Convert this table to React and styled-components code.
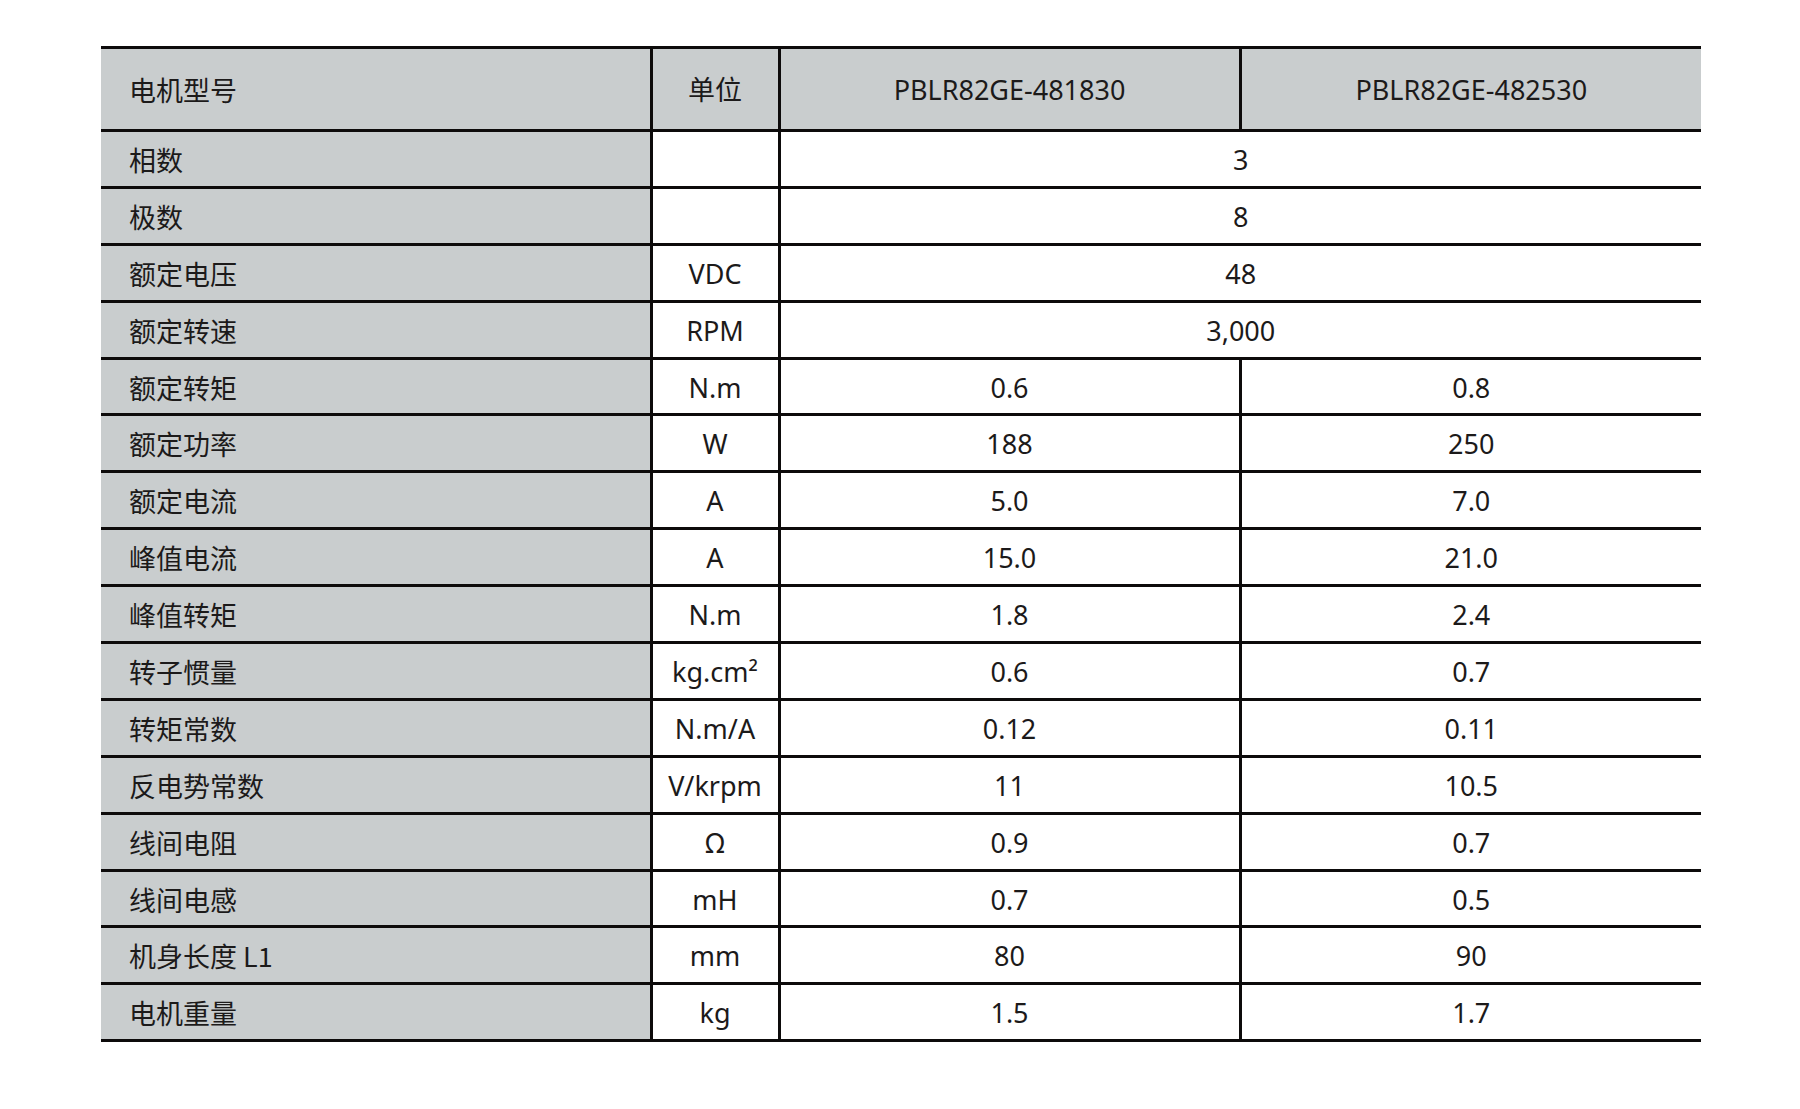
import React from "react";
import styled, { createGlobalStyle } from "styled-components";

const GlobalStyle = createGlobalStyle`
  html, body {
    margin: 0;
    padding: 0;
    background: #ffffff;
  }
  body {
    font-family: "Noto Sans", "Noto Sans CJK SC", sans-serif;
    color: #1c1a1a;
  }
`;

const Page = styled.div`
  width: 1800px;
  min-height: 1109px;
  padding: 46px 0 0 101px;
  box-sizing: border-box;
`;

const SpecTable = styled.table`
  border-collapse: collapse;
  table-layout: fixed;
  width: 1600px;
  font-size: 27px;
  line-height: 1;
`;

const Col = styled.col`
  width: ${(p) => p.$w}px;
`;

const Row = styled.tr`
  height: ${(p) => (p.$header ? 83 : 56.9)}px;
`;

const Cell = styled.td`
  padding: 1px 0 0 0;
  border: 3px solid #0d0b0b;
  text-align: center;
  vertical-align: middle;
  background: ${(p) => (p.$shaded ? "#c9cdce" : "#ffffff")};
  white-space: nowrap;
  font-weight: 400;
  font-family: "Noto Sans", "Noto Sans CJK SC", sans-serif;

  &:first-child {
    border-left: none;
  }
  &:last-child {
    border-right: none;
  }
`;

const HeadCell = styled(Cell).attrs({ as: "th" })`
  padding-top: 0;
`;

const LabelCell = styled(Cell)`
  background: #c9cdce;
  text-align: left;
  padding-left: 28px;
  font-family: "Noto Sans CJK SC", "Noto Sans", sans-serif;
`;

const HeadLabelCell = styled(LabelCell).attrs({ as: "th" })`
  padding-top: 0;
`;

const columns = [550, 128, 461, 461];

const rows = [
  ["相数", "", "3"],
  ["极数", "", "8"],
  ["额定电压", "VDC", "48"],
  ["额定转速", "RPM", "3,000"],
  ["额定转矩", "N.m", "0.6", "0.8"],
  ["额定功率", "W", "188", "250"],
  ["额定电流", "A", "5.0", "7.0"],
  ["峰值电流", "A", "15.0", "21.0"],
  ["峰值转矩", "N.m", "1.8", "2.4"],
  ["转子惯量", "kg.cm²", "0.6", "0.7"],
  ["转矩常数", "N.m/A", "0.12", "0.11"],
  ["反电势常数", "V/krpm", "11", "10.5"],
  ["线间电阻", "Ω", "0.9", "0.7"],
  ["线间电感", "mH", "0.7", "0.5"],
  ["机身长度 L1", "mm", "80", "90"],
  ["电机重量", "kg", "1.5", "1.7"],
];

export default function App() {
  return (
    <>
      <GlobalStyle />
      <Page>
        <SpecTable>
          <colgroup>
            {columns.map((w, i) => (
              <Col key={i} $w={w} />
            ))}
          </colgroup>
          <thead>
            <Row $header>
              <HeadLabelCell>电机型号</HeadLabelCell>
              <HeadCell $shaded>单位</HeadCell>
              <HeadCell $shaded>PBLR82GE-481830</HeadCell>
              <HeadCell $shaded>PBLR82GE-482530</HeadCell>
            </Row>
          </thead>
          <tbody>
            {rows.map(([label, unit, a, b]) => (
              <Row key={label}>
                <LabelCell>{label}</LabelCell>
                <Cell>{unit}</Cell>
                {b === undefined ? (
                  <Cell colSpan={2}>{a}</Cell>
                ) : (
                  <>
                    <Cell>{a}</Cell>
                    <Cell>{b}</Cell>
                  </>
                )}
              </Row>
            ))}
          </tbody>
        </SpecTable>
      </Page>
    </>
  );
}
